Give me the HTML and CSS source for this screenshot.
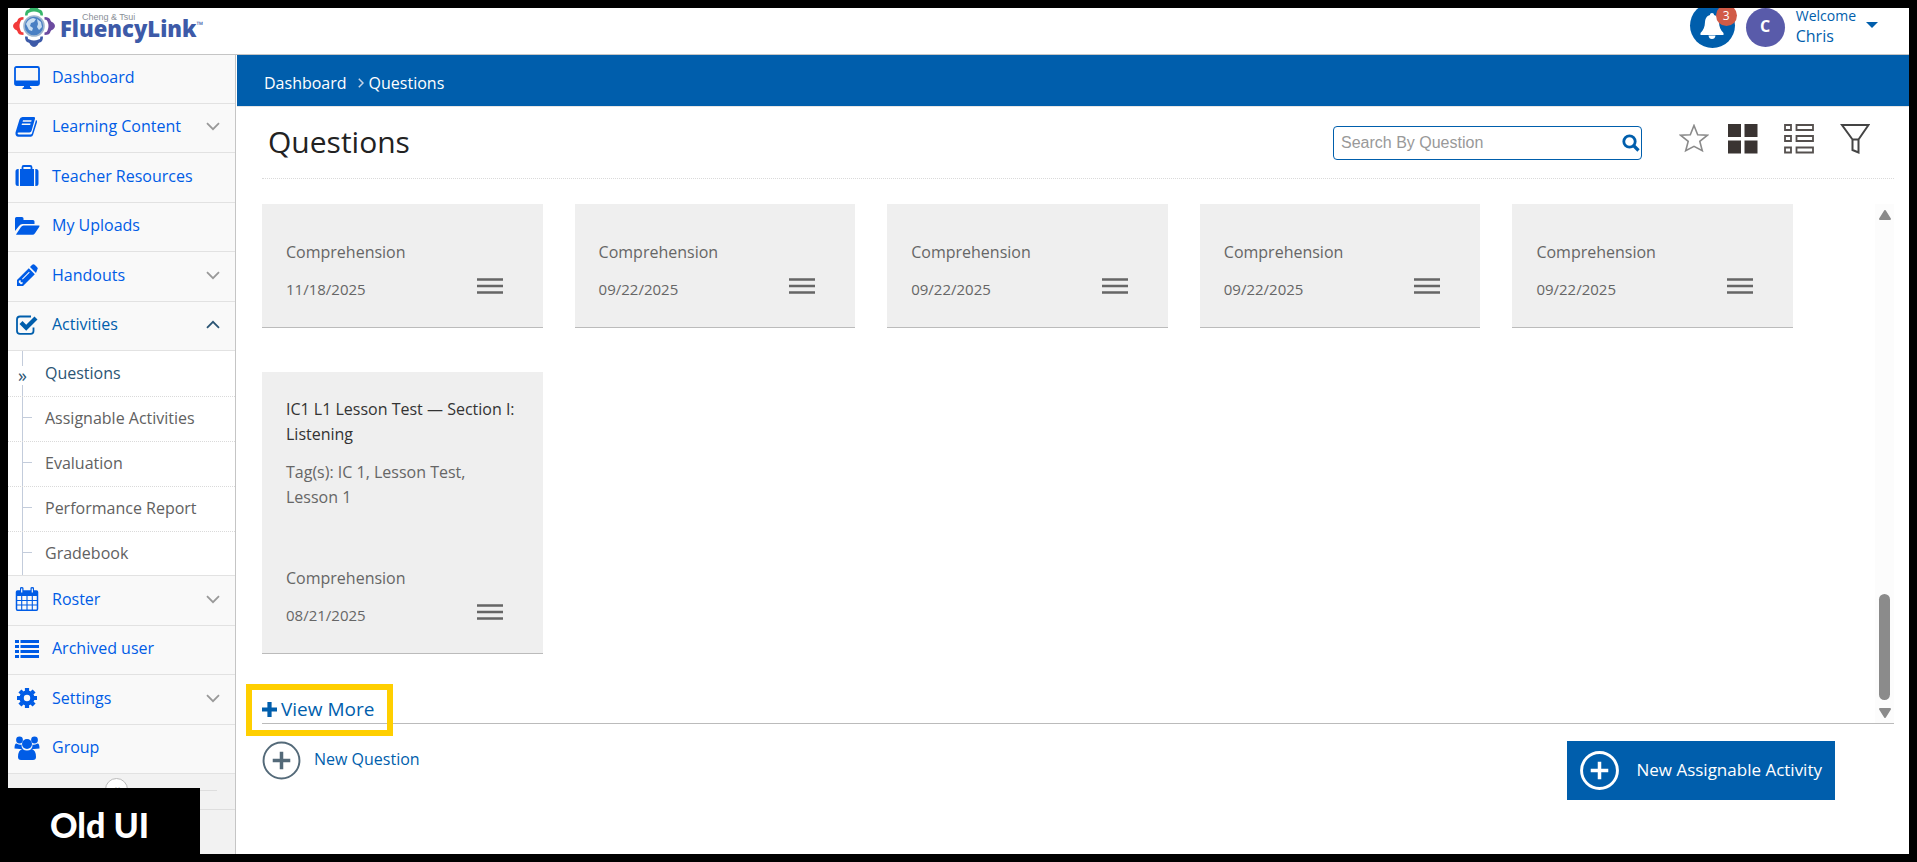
FILE: index.html
```html
<!DOCTYPE html>
<html lang="en">
<head>
    <meta charset="UTF-8">
    <meta name="viewport" content="width=device-width, initial-scale=1.0">
    <title>FluencyLink - Questions</title>
    <link rel="stylesheet" href="styles.css">
</head>
<body>
    <!-- Shared icons -->
    <svg class="sprite" aria-hidden="true">
        <symbol id="chevron" viewBox="0 0 14 9"><path d="M1 1.2l6 6 6-6" fill="none" stroke="currentColor" stroke-width="1.8"/></symbol>
        <symbol id="menu" viewBox="0 0 26 16"><path d="M0 1.5h26M0 8h26M0 14.5h26" stroke="currentColor" stroke-width="2.4"/></symbol>
        <symbol id="circle-plus" viewBox="0 0 40 40"><circle cx="20" cy="20" r="18.4" fill="none" stroke="currentColor" stroke-width="var(--ring, 2)"/><path d="M11 20h18M20 11v18" stroke="currentColor" stroke-width="3.6"/></symbol>
    </svg>

    <div class="page">
        <header class="header">
            <a class="logo" href="#" aria-label="Cheng &amp; Tsui FluencyLink">
                <svg class="logo-mark" viewBox="0 0 44 44" aria-hidden="true">
                    <defs><path id="person" d="M13 11.5Q13 6 16.5 5.5 18 5 18.500 3 22-1 25.500 3 26 5 27.500 5.500 31 6 31 11.500L28.500 11.500Q28.500 9 26.500 8.500 22 6.500 17.500 8.500 15.500 9 15.500 11.500z"/></defs>
                    <circle cx="22" cy="22" r="10" fill="#4a80c4" stroke="#9fb6cf" stroke-width="1.6"/>
                    <path d="M14 20q2-5 7-6l3 1-2 3-3 1-1 3 3 2-1 3-3-1zM25 15l4 3 1 5-3 3-2-3 1-3z" fill="#c9def2"/>
                    <use href="#person" fill="#38b66b"/>
                    <use href="#person" fill="#f23a3a" transform="rotate(-90 22 22)"/>
                    <use href="#person" fill="#6b4aa0" transform="rotate(90 22 22)"/>
                    <use href="#person" fill="#3d5aa8" transform="rotate(180 22 22)"/>
                </svg>
                <span class="logo-text">
                    <span class="logo-small">Cheng &amp; Tsui</span>
                    <span class="logo-name">FluencyLink<sup>™</sup></span>
                </span>
            </a>
            <div class="user">
                <button class="bell" aria-label="Notifications">
                    <svg viewBox="0 0 24 26" aria-hidden="true"><path d="M12 0c1.300 0 2 .8 2 2 3.500 1 4.800 4 5 7 .2 5 1.500 8 4.500 11v2H.5v-2C3.500 17 4.800 14 5 9c.2-3 1.500-6 5-7 0-1.200.7-2 2-2zM8.500 22.500h7q-.5 3.500-3.500 3.500t-3.500-3.500z" fill="#fff"/></svg>
                    <span class="badge">3</span>
                </button>
                <span class="avatar">C</span>
                <button class="account">
                    <span class="account-text"><span class="welcome">Welcome</span><span class="name">Chris</span></span>
                    <span class="caret"></span>
                </button>
            </div>
        </header>

        <div class="body">
            <aside class="sidebar">
                <ul class="nav">
                    <li class="nav-item"><a href="#">
                        <svg class="icon" viewBox="0 0 26 24"><path d="M2.500 1h21Q25 1 25 2.500v15q0 1.500-1.500 1.500h-21Q1 19 1 17.500v-15Q1 1 2.500 1z" fill="none" stroke="currentColor" stroke-width="1.800"/><path d="M1 14.500h24V18q0 1-1 1H2q-1 0-1-1zM10 19h6v2l1.500 1v1h-9v-1l1.500-1z" fill="currentColor"/></svg>
                        Dashboard</a></li>
                    <li class="nav-item"><a href="#">
                        <svg class="icon" viewBox="0 0 26 24"><path fill-rule="evenodd" d="M8.500 2H20q1.500.3 1 1.800L17.500 16q-.4 1.400-2 1.400H4.800q-1.500 0-1.200 1.200.2.900 1.400.9h11.500q1 0 1.400-1L22 5q1.500.5 1 2.200L19 20q-.5 1.800-2.300 1.800H4.500Q1 21.500 1.500 17.500L5.500 4.500Q6.200 2 8.500 2zM9 5.300l-.4 1.500h8.600l.4-1.500zM8 8.600l-.4 1.500h8.600l.4-1.500z" fill="currentColor"/></svg>
                        Learning Content</a><svg class="chevron"><use href="#chevron"/></svg></li>
                    <li class="nav-item"><a href="#">
                        <svg class="icon" viewBox="0 0 26 24"><path d="M8.500 6V3.200Q8.500 2 9.700 2h6.600q1.200 0 1.200 1.200V6" fill="none" stroke="currentColor" stroke-width="1.800"/><path d="M6 5h14v17H6zM4.700 5v17H4q-2.500 0-2.500-2.500v-12Q1.500 5 4 5zM21.300 5v17h.7q2.500 0 2.500-2.500v-12Q24.500 5 22 5z" fill="currentColor"/></svg>
                        Teacher Resources</a></li>
                    <li class="nav-item"><a href="#">
                        <svg class="icon" viewBox="0 0 26 24"><path d="M1 17V4.500Q1 3 2.500 3H8q1.500 0 1.500 1.500V6H19q1.500 0 1.500 1.500V10H8.500q-2 0-3.500 2zM2 20.500l5-7.500q1-1.500 2.500-1.500H25q1 0 .3 1.200L21 19.200Q20 20.800 18.500 20.800H2.500z" fill="currentColor"/></svg>
                        My Uploads</a></li>
                    <li class="nav-item"><a href="#">
                        <svg class="icon" viewBox="0 0 26 24"><path fill-rule="evenodd" d="M3 17L14.800 5.200l6 6L9 23H3zM5 17.500L4.700 19.200 6.800 21.300 8.300 21 8.800 19.300H6.700V17.300zM8 15.800l7-7 .7.700-7 7zM16 4l2.200-2.200q1.200-1.200 2.500 0l2.500 2.500q1.200 1.200 0 2.500L22 10z" fill="currentColor"/></svg>
                        Handouts</a><svg class="chevron"><use href="#chevron"/></svg></li>
                    <li class="nav-item open"><a href="#">
                        <svg class="icon" viewBox="0 0 26 24"><path d="M19.500 14.500V18q0 2.800-2.800 2.800H6Q3 20.800 3 18V6.500Q3 3.500 6 3.500h11" fill="none" stroke="currentColor" stroke-width="1.800"/><path d="M5.500 11l3-3 3.700 3.700L20.500 3.500l3 3L12.200 17.700z" fill="currentColor"/></svg>
                        Activities</a><svg class="chevron"><use href="#chevron"/></svg></li>
                    <li class="subnav">
                        <ul>
                            <li class="current"><a href="#">Questions</a></li>
                            <li><a href="#">Assignable Activities</a></li>
                            <li><a href="#">Evaluation</a></li>
                            <li><a href="#">Performance Report</a></li>
                            <li><a href="#">Gradebook</a></li>
                        </ul>
                    </li>
                    <li class="nav-item tall"><a href="#">
                        <svg class="icon" viewBox="0 0 26 24"><path d="M3.500 4h19q1 0 1 1v17q0 1.200-1 1.200h-19q-1 0-1-1.200V5q0-1 1-1z" fill="none" stroke="currentColor" stroke-width="1.500"/><path d="M2.500 4h21v5h-21zM6 1q0-1 1.700-1T9.500 1v5.500H6zM16.500 1q0-1 1.800-1T20 1v5.500h-3.500z" fill="currentColor"/><path d="M7.700 1.500v4M18.300 1.500v4" stroke="#f9f9f9" stroke-width="1.200"/><path d="M2.500 13.500h21M2.500 18h21M7.700 9v14M13 9v14M18.300 9v14" stroke="currentColor" stroke-width="1.100"/></svg>
                        Roster</a><svg class="chevron"><use href="#chevron"/></svg></li>
                    <li class="nav-item"><a href="#">
                        <svg class="icon" viewBox="0 0 26 24"><path d="M1 4.500h4M6.500 4.500h18.500M1 9.500h4M6.500 9.500h18.500M1 14.500h4M6.500 14.500h18.500M1 19.500h4M6.500 19.500h18.500" stroke="currentColor" stroke-width="3"/></svg>
                        Archived user</a></li>
                    <li class="nav-item tall"><a href="#">
                        <svg class="icon" viewBox="0 0 26 24"><circle cx="13" cy="12" r="5.400" fill="none" stroke="currentColor" stroke-width="4.400"/><path d="M13 2v3M13 19v3M3 12h3M20 12h3M5.900 4.900l2.200 2.200M17.900 16.900l2.200 2.200M5.900 19.100l2.200-2.200M17.900 7.100l2.200-2.200" stroke="currentColor" stroke-width="4.200"/></svg>
                        Settings</a><svg class="chevron"><use href="#chevron"/></svg></li>
                    <li class="nav-item"><a href="#">
                        <svg class="icon" viewBox="0 0 26 24"><circle cx="5.500" cy="4" r="3.400" fill="currentColor"/><circle cx="20.500" cy="4" r="3.400" fill="currentColor"/><circle cx="13" cy="8" r="5" fill="currentColor"/><path d="M.500 12.500q0-5 2-5 3.500 1.800 5 1-.3 3 1.500 4.800zM25.500 12.500q0-5-2-5-3.500 1.800-5 1 .3 3-1.500 4.800zM8.500 13q4.500 3 9 0 4.500 1 4.500 8 0 3-3 3H7q-3 0-3-3 0-7 4.500-8z" fill="currentColor"/></svg>
                        Group</a></li>
                </ul>
                <div class="collapse"><button class="collapse-btn" aria-label="Collapse menu">«</button></div>
            </aside>

            <main class="main">
                <nav class="breadcrumb" aria-label="Breadcrumb">
                    <a href="#">Dashboard</a>
                    <svg class="crumb-arrow" viewBox="0 0 6 10"><path d="M.8.8L5 5 .8 9.200" fill="none" stroke="currentColor" stroke-width="1.500"/></svg>
                    <a href="#">Questions</a>
                </nav>

                <div class="content">
                    <div class="title-bar">
                        <h1>Questions</h1>
                        <form class="search">
                            <input type="text" placeholder="Search By Question" aria-label="Search By Question">
                            <button type="button" aria-label="Search"><svg viewBox="0 0 18 18"><circle cx="7.500" cy="7.500" r="5.700" fill="none" stroke="currentColor" stroke-width="2.800"/><path d="M11.500 11.500l5 5" stroke="currentColor" stroke-width="3.200"/></svg></button>
                        </form>
                        <div class="tools">
                            <button aria-label="Favorites"><svg viewBox="0 0 30 30"><path d="M15 1.500l3.700 9.300 9.800.4-7.700 6.200 2.500 9.300L15 22.300l-8.300 4.400 2.500-9.300-7.700-6.200 9.800-.4z" fill="none" stroke="#8a8a8a" stroke-width="1.600"/></svg></button>
                            <button aria-label="Grid view"><svg viewBox="0 0 30 30"><path d="M0 0h13v13H0zM16.500 0h13v13h-13zM0 16.500h13v13H0zM16.500 16.500h13v13h-13z" fill="#3a3432"/></svg></button>
                            <button aria-label="List view"><svg viewBox="0 0 30 30"><path d="M1 1h6v5H1zM12.500 1H29v5H12.500zM1 12h6v5H1zM12.500 12H29v5H12.500zM1 23.500h6v5H1zM12.500 23.500H29v5H12.500z" fill="none" stroke="#55504e" stroke-width="1.800"/></svg></button>
                            <button aria-label="Filter"><svg viewBox="0 0 30 30"><path d="M2 1h26.500L18.500 15.500v13l-6-2.500V15.500zM12.500 15.500h6" fill="none" stroke="#444" stroke-width="2"/></svg></button>
                        </div>
                    </div>

                    <div class="list">
                        <div class="list-body">
                            <div class="cards">
                                <article class="card short"><p>Comprehension</p><div class="card-foot"><time>11/18/2025</time><button aria-label="Actions"><svg><use href="#menu"/></svg></button></div></article>
                                <article class="card short"><p>Comprehension</p><div class="card-foot"><time>09/22/2025</time><button aria-label="Actions"><svg><use href="#menu"/></svg></button></div></article>
                                <article class="card short"><p>Comprehension</p><div class="card-foot"><time>09/22/2025</time><button aria-label="Actions"><svg><use href="#menu"/></svg></button></div></article>
                                <article class="card short"><p>Comprehension</p><div class="card-foot"><time>09/22/2025</time><button aria-label="Actions"><svg><use href="#menu"/></svg></button></div></article>
                                <article class="card short"><p>Comprehension</p><div class="card-foot"><time>09/22/2025</time><button aria-label="Actions"><svg><use href="#menu"/></svg></button></div></article>
                                <article class="card">
                                    <div class="card-body">
                                        <h2>IC1 L1 Lesson Test — Section I: Listening</h2>
                                        <p class="tags">Tag(s): IC 1, Lesson Test, Lesson 1</p>
                                    </div>
                                    <p>Comprehension</p>
                                    <div class="card-foot"><time>08/21/2025</time><button aria-label="Actions"><svg><use href="#menu"/></svg></button></div>
                                </article>
                            </div>
                            <div class="more">
                                <a href="#"><svg viewBox="0 0 15 15"><path d="M0 7.500h15M7.500 0v15" stroke="currentColor" stroke-width="4.200"/></svg>View More</a>
                                <span class="highlight"></span>
                            </div>
                        </div>
                        <div class="scrollbar" aria-hidden="true">
                            <svg viewBox="0 0 12 10"><path d="M6 1l5 8H1z" fill="#8b8b8b" stroke="#8b8b8b" stroke-width="2" stroke-linejoin="round"/></svg>
                            <span class="thumb"></span>
                            <svg viewBox="0 0 12 10"><path d="M6 9l5-8H1z" fill="#8b8b8b" stroke="#8b8b8b" stroke-width="2" stroke-linejoin="round"/></svg>
                        </div>
                    </div>

                    <div class="actions">
                        <a class="new-question" href="#"><svg><use href="#circle-plus"/></svg><span>New Question</span></a>
                        <button class="new-activity"><svg><use href="#circle-plus"/></svg><span>New Assignable Activity</span></button>
                    </div>
                </div>
            </main>
        </div>
        <div class="label">Old UI</div>
    </div>
</body>
</html>
```
FILE: styles.css
```css
* {
    box-sizing: border-box;
}

body {
    margin: 0;
    font-family: "Open Sans", "Noto Sans", sans-serif;
    font-size: 16px;
    line-height: 25px;
    color: #666;
    background: #fff;
}

h1, h2, p, ul {
    margin: 0;
    padding: 0;
    font-weight: 400;
}

ul {
    list-style: none;
}

a {
    text-decoration: none;
    color: #005eac;
}

button {
    padding: 0;
    border: 0;
    background: none;
    font: inherit;
    color: inherit;
    cursor: pointer;
}

svg {
    display: block;
    flex: none;
}

.sprite {
    position: absolute;
    width: 0;
    height: 0;
}

.page {
    position: relative;
    display: flex;
    flex-direction: column;
    min-height: 100vh;
    border: 8px solid #000;
    overflow: hidden;
}

/* Header */
.header {
    display: flex;
    justify-content: space-between;
    height: 47px;
    border-bottom: 1px solid #c5c5c5;
}

.logo {
    display: flex;
    gap: 4px;
    padding-left: 4px;
}

.logo-mark {
    width: 44px;
    height: 44px;
    margin-top: -4px;
}

.logo-text {
    display: flex;
    flex-direction: column;
}

.logo-small {
    padding: 4px 0 0 22px;
    font: 9px/10px "Liberation Sans", Arial, sans-serif;
    color: #8a8f98;
    white-space: nowrap;
}

.logo-name {
    margin-top: -5px;
    font: 800 22px/22px "Open Sans", sans-serif;
    color: #3d5aa8;
}

.logo-name sup {
    font-size: 9px;
    font-weight: 400;
    line-height: 1px;
    vertical-align: 9px;
}

.user {
    display: flex;
    align-items: flex-start;
    gap: 11px;
    padding-right: 31px;
    color: #005eac;
}

.bell {
    position: relative;
    display: flex;
    align-items: center;
    justify-content: center;
    width: 45px;
    height: 45px;
    margin-top: -5px;
    border-radius: 50%;
    background: #005eac;
}

.bell svg {
    width: 24px;
    height: 26px;
}

.badge {
    position: absolute;
    top: 2px;
    right: -2px;
    width: 21px;
    height: 21px;
    border-radius: 50%;
    background: #d15b47;
    color: #fff;
    font-size: 12px;
    line-height: 21px;
}

.avatar {
    width: 39px;
    height: 39px;
    border-radius: 50%;
    background: #595baa;
    color: #fff;
    font-size: 16px;
    font-weight: 700;
    line-height: 37px;
    text-align: center;
}

.account {
    display: flex;
    gap: 10px;
    text-align: left;
}

.account-text {
    display: flex;
    flex-direction: column;
}

.welcome {
    font-size: 14px;
    line-height: 16px;
}

.name {
    font-size: 16px;
    line-height: 24px;
}

.caret {
    margin-top: 14px;
    border: 6px solid transparent;
    border-top-color: #005eac;
    border-bottom: 0;
}

/* Sidebar */
.body {
    display: flex;
    flex: 1;
}

.sidebar {
    flex: none;
    width: 228px;
    border-right: 1px solid #c5c5c5;
    background: #f2f2f2;
}

.nav-item {
    display: flex;
    align-items: center;
    height: 49px;
    padding: 0 15px 3px 6px;
    border-bottom: 1px solid #e2e2e2;
    background: #f9f9f9;
    color: #999;
}

.nav-item:nth-child(3),
.nav-item:nth-child(5),
.nav-item.tall {
    height: 50px;
}

.nav-item a {
    display: flex;
    flex: 1;
    align-items: center;
    gap: 12px;
    color: #005ce6;
}

.icon {
    width: 26px;
    height: 24px;
}

.chevron {
    width: 14px;
    height: 9px;
}

.nav-item.open,
.nav-item.open a {
    color: #005eac;
}

.nav-item.open .chevron {
    transform: rotate(180deg);
    color: #2b5574;
}

.subnav {
    position: relative;
    background: #fff;
    border-bottom: 1px solid #e2e2e2;
}

/* Tree line beside the submenu */
.subnav::before {
    content: "";
    position: absolute;
    top: 0;
    bottom: 0;
    left: 14px;
    border-left: 1px solid #c3ccdb;
}

.subnav li {
    position: relative;
    height: 45px;
    padding-left: 37px;
    border-bottom: 1px dotted #dadada;
    line-height: 43px;
}

.subnav li:first-child {
    height: 46px;
    line-height: 45px;
}

.subnav li:last-child {
    height: 43px;
    border-bottom: 0;
}

.subnav a {
    color: #616161;
}

.subnav li::before {
    content: "";
    position: absolute;
    top: 20px;
    left: 14px;
    width: 10px;
    border-top: 1px solid #c3ccdb;
}

.subnav .current::before {
    content: "»";
    top: 15px;
    left: 10px;
    border: 0;
    background: #fff;
    color: #2b5574;
    font-size: 18px;
    line-height: 19px;
}

.subnav .current a {
    color: #2b5574;
}

.collapse {
    display: flex;
    justify-content: center;
    height: 36px;
    padding: 4px 20px 0 10px;
    border-bottom: 1px solid #dedede;
    background: linear-gradient(#dedede, #dedede) 18px 16px / 191px 1px no-repeat;
}

.collapse-btn {
    width: 23px;
    height: 23px;
    border: 1px solid #bbb;
    border-radius: 50%;
    background: #fff;
    color: #aaa;
    line-height: 19px;
}

/* Main */
.main {
    flex: 1;
    min-width: 0;
    padding-left: 1px;
}

.breadcrumb {
    display: flex;
    align-items: center;
    height: 52px;
    padding: 5px 0 0 27px;
    border-bottom: 1px solid #e5e5e5;
    background: #005eac;
    color: #c5d3e6;
}

.breadcrumb a {
    color: #fff;
}

.crumb-arrow {
    width: 6px;
    height: 10px;
    margin: 0 5px 0 11px;
}

.content {
    padding: 0 15px 0 25px;
}

.title-bar {
    display: flex;
    height: 72px;
    padding: 17px 24px 0 6px;
    border-bottom: 1px dotted #dadada;
}

h1 {
    flex: 1;
    font-size: 30px;
    line-height: 36px;
    color: #222;
}

.search {
    display: flex;
    align-items: center;
    width: 309px;
    height: 34px;
    margin: 2px 37px 0 0;
    padding: 0 1px 0 7px;
    border: 1px solid #005eac;
    border-radius: 4px;
}

.search input {
    flex: 1;
    min-width: 0;
    padding: 0;
    border: 0;
    outline: 0;
    background: none;
    font: 16px/20px "Liberation Sans", Arial, sans-serif;
    color: #333;
}

.search input::placeholder {
    color: #999;
    opacity: 1;
}

.search button {
    color: #005eac;
}

.search svg {
    width: 18px;
    height: 18px;
}

.tools {
    display: flex;
    align-items: flex-start;
    gap: 26px;
}

.tools button:first-child {
    margin-right: -7px;
}

.tools svg {
    width: 30px;
    height: 30px;
}

.list {
    display: flex;
    margin-top: 25px;
    border-bottom: 1px solid #bbb;
}

.list-body {
    flex: 1;
    min-width: 0;
}

.cards {
    display: grid;
    grid-template-columns: repeat(5, 1fr);
    align-items: start;
    gap: 44px 32px;
    padding-right: 82px;
}

.card {
    padding: 25px 24px;
    border-bottom: 1px solid #bbb;
    background: #efefef;
}

.card.short {
    padding-top: 36px;
}

.card-body {
    min-height: 169px;
}

.card h2 {
    font-size: 16px;
    line-height: 25px;
    color: #333;
}

.tags {
    margin-top: 13px;
}

.card-foot {
    display: flex;
    align-items: flex-start;
    justify-content: space-between;
    padding-right: 16px;
    margin-top: 12px;
}

.card-foot time {
    font-size: 15px;
}

.card-foot svg {
    width: 26px;
    height: 16px;
    margin-top: 1px;
}

.more {
    position: relative;
    height: 69px;
    padding-top: 43px;
}

.more a {
    display: inline-flex;
    align-items: center;
    gap: 4px;
    font-size: 19px;
}

.more svg {
    width: 15px;
    height: 15px;
}

.highlight {
    position: absolute;
    top: 30px;
    left: -16px;
    width: 147px;
    height: 52px;
    border: 6px solid #ffcf00;
}

.scrollbar {
    display: flex;
    flex-direction: column;
    align-items: center;
    width: 19px;
    padding: 6px 0 5px;
    background: #fcfcfc;
}

.scrollbar svg {
    width: 12px;
    height: 10px;
}

.thumb {
    width: 11px;
    height: 106px;
    margin: auto 0 8px;
    border-radius: 6px;
    background: #8b8b8b;
}

.actions {
    display: flex;
    align-items: flex-start;
    justify-content: space-between;
    padding: 17px 59px 0 0;
}

.actions svg {
    width: 39px;
    height: 39px;
}

.actions span {
    padding-bottom: 3px;
}

.new-question {
    display: flex;
    align-items: center;
    gap: 13px;
}

.new-question svg {
    color: #546a79;
}

.new-activity {
    display: flex;
    align-items: center;
    gap: 17px;
    height: 59px;
    padding: 0 13px;
    background: #005eac;
    color: #fff;
    font-size: 17px;
    font-weight: 500;
    --ring: 3;
}

/* Caption in the corner */
.label {
    position: absolute;
    bottom: 0;
    left: 0;
    width: 192px;
    height: 66px;
    padding-right: 9px;
    background: #000;
    color: #fff;
    font: 900 34px/74px Lato, sans-serif;
    text-align: center;
}
```
